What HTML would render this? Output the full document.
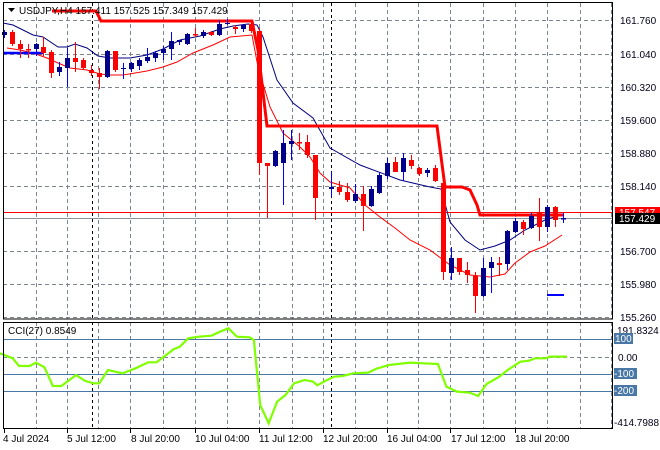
<!DOCTYPE html>
<html><head><meta charset="utf-8"><style>
html,body{margin:0;padding:0;background:#fff;}
svg{display:block;font-family:"Liberation Sans",sans-serif;}
</style></head><body>
<svg width="660" height="450" viewBox="0 0 660 450" xmlns="http://www.w3.org/2000/svg">
<rect width="660" height="450" fill="#fff"/>
<!-- vertical grid -->
<g stroke="#7a8590" stroke-width="1" stroke-dasharray="4,3">
<path d="M36.5 3V319M67.5 3V319M98.5 3V319M130.5 3V319M163.5 3V319M195.5 3V319M227.5 3V319M259.5 3V319M292.5 3V319M323.5 3V319M355.5 3V319M387.5 3V319M418.5 3V319M450.5 3V319M483.5 3V319M515.5 3V319M547.5 3V319M580.5 3V319M611.5 3V319"/>
<path d="M36.5 322V429M67.5 322V429M98.5 322V429M130.5 322V429M163.5 322V429M195.5 322V429M227.5 322V429M259.5 322V429M292.5 322V429M323.5 322V429M355.5 322V429M387.5 322V429M418.5 322V429M450.5 322V429M483.5 322V429M515.5 322V429M547.5 322V429M580.5 322V429M611.5 322V429"/>
<path d="M3 20.5H613M3 54.5H613M3 87.5H613M3 120.5H613M3 153.5H613M3 186.5H613M3 251.5H613M3 284.5H613M3 317.5H613"/>
<path d="M3 357.5H613"/>
</g>
<g stroke="#000" stroke-width="1" stroke-dasharray="3,3">
<path d="M92.5 3V319M92.5 322V429M331.5 3V319M331.5 322V429"/>
</g>
<!-- price lines -->
<line x1="3" y1="212.5" x2="613" y2="212.5" stroke="#ff0000"/>
<line x1="3" y1="218.5" x2="613" y2="218.5" stroke="#8a949c"/>
<!-- MAs -->
<polyline fill="none" stroke="#000080" stroke-width="1" points="3,23 13,25 33,35 43,37 58,47 67,47 75,44 87,48 98,56 110,58 130,58 147,55 163,49 180,40 200,36 220,29 233,26 248,24 257,25 263,37 277,80 293,103 313,118 330,148 360,165 400,180 430,187 441,189 450,222 465,240 480,250 495,246 510,240 525,230 545,220 560,215 563,214"/>
<polyline fill="none" stroke="#ff0000" stroke-width="1" points="7,48 20,50 33,53 47,58 58,63 70,68 87,70 100,74 110,75 123,75 147,71 163,67 177,62 193,53 213,45 230,37 252,35 258,67 270,107 283,133 300,147 310,157 320,173 330,182 350,188 365,205 380,217 395,228 410,240 430,250 450,265 470,275 490,277 505,274 515,263 530,252 545,246 562,235"/>
<!-- stepped red -->
<polyline fill="none" stroke="#ff0000" stroke-width="3" points="52,11 96,11 101,21 252,21 258,50 267,126 437,126 445,187 462,187 470,190 477,205 480,215 563,215"/>
<line x1="3" y1="53" x2="43" y2="53" stroke="#0000ff" stroke-width="2.5"/>
<line x1="547" y1="295" x2="564" y2="295" stroke="#0000ff" stroke-width="2"/>
<!-- candles -->
<g id="c"></g>
<g stroke-width="1">
<g stroke="#0000ff" fill="#00008b">
<path d="M4.5 30V38M36.5 43V56M59.5 62V76M67.5 48V87M107.5 50V78M123.5 63V79M131.5 62V72M139.5 58V70M147.5 48V63M155.5 51V62M163.5 46V60M171.5 32V60M179.5 40V45M187.5 33V45M203.5 30V38M219.5 20V36M227.5 19V25M243.5 24V32M275.5 150V167M283.5 130V205M291.5 130V160M331.5 172V197M355.5 184V203M371.5 186V207M379.5 172V194M387.5 158V179M403.5 153V181M427.5 168V177M451.5 247V280M483.5 258V297M491.5 257V293M507.5 230V270M515.5 218V233M531.5 213V229M547.5 205V232M563.5 213V223"/>
</g>
<g fill="#00008b">
<rect x="2" y="32" width="5" height="3"/><rect x="34" y="44" width="5" height="5"/><rect x="57" y="67" width="5" height="5"/><rect x="65" y="58" width="5" height="10"/><rect x="105" y="51" width="5" height="26"/><rect x="121" y="68" width="5" height="1"/><rect x="129" y="63" width="5" height="6"/><rect x="137" y="60" width="5" height="6"/><rect x="145" y="57" width="5" height="4"/><rect x="153" y="53" width="5" height="5"/><rect x="161" y="49" width="5" height="4"/><rect x="169" y="41" width="5" height="8"/><rect x="177" y="40" width="5" height="2"/><rect x="185" y="34" width="5" height="10"/><rect x="201" y="32" width="5" height="4"/><rect x="217" y="24" width="5" height="11"/><rect x="225" y="23" width="5" height="1"/><rect x="241" y="25" width="5" height="4"/><rect x="273" y="151" width="5" height="15"/><rect x="281" y="143" width="5" height="20"/><rect x="289" y="141" width="5" height="3"/><rect x="329" y="187" width="5" height="2"/><rect x="353" y="194" width="5" height="7"/><rect x="369" y="189" width="5" height="17"/><rect x="377" y="175" width="5" height="18"/><rect x="385" y="163" width="5" height="13"/><rect x="401" y="158" width="5" height="14"/><rect x="425" y="170" width="5" height="3"/><rect x="449" y="258" width="5" height="15"/><rect x="481" y="268" width="5" height="28"/><rect x="489" y="262" width="5" height="6"/><rect x="505" y="231" width="5" height="33"/><rect x="513" y="221" width="5" height="11"/><rect x="529" y="216" width="5" height="12"/><rect x="545" y="207" width="5" height="20"/><rect x="561" y="218" width="5" height="1.5"/>
</g>
<g stroke="#ff0000">
<path d="M12.5 30V46M20.5 40V58M28.5 44V58M43.5 37V56M51.5 50V78M75.5 42V72M83.5 58V70M91.5 65V76M99.5 68V89M115.5 51V72M195.5 28V37M211.5 31V36M235.5 25V34M251.5 22V33M259.5 28V175M267.5 163V218M299.5 133V150M307.5 135V158M315.5 155V220M339.5 181V195M347.5 183V202M363.5 186V231M395.5 157V172M411.5 155V169M419.5 167V176M435.5 165V182M443.5 183V280M459.5 258V275M467.5 262V283M475.5 272V313M499.5 257V276M523.5 220V235M539.5 198V241M555.5 206V227"/>
</g>
<g fill="#ff0000">
<rect x="10" y="32" width="5" height="12"/><rect x="18" y="44" width="5" height="5"/><rect x="26" y="49" width="5" height="1.5"/><rect x="41" y="47" width="5" height="6"/><rect x="49" y="52" width="5" height="21"/><rect x="73" y="58" width="5" height="4"/><rect x="81" y="60" width="5" height="8"/><rect x="89" y="70" width="5" height="3"/><rect x="97" y="73" width="5" height="4"/><rect x="113" y="51" width="5" height="19"/><rect x="193" y="34" width="5" height="1.5"/><rect x="209" y="32" width="5" height="3"/><rect x="233" y="27" width="5" height="2"/><rect x="249" y="24" width="5" height="7"/><rect x="257" y="31" width="5" height="132"/><rect x="265" y="163" width="5" height="3"/><rect x="297" y="142" width="5" height="1.5"/><rect x="305" y="142" width="5" height="13"/><rect x="313" y="155" width="5" height="43"/><rect x="337" y="187" width="5" height="5"/><rect x="345" y="192" width="5" height="8"/><rect x="361" y="194" width="5" height="12"/><rect x="393" y="162" width="5" height="10"/><rect x="409" y="160" width="5" height="6"/><rect x="417" y="168" width="5" height="6"/><rect x="433" y="168" width="5" height="13"/><rect x="441" y="183" width="5" height="89"/><rect x="457" y="258" width="5" height="14"/><rect x="465" y="270" width="5" height="5"/><rect x="473" y="276" width="5" height="20"/><rect x="497" y="263" width="5" height="2"/><rect x="521" y="222" width="5" height="7"/><rect x="537" y="213" width="5" height="14"/><rect x="553" y="207" width="5" height="13"/>
</g>
</g>
<!-- CCI levels -->
<g stroke="#4a78a6" stroke-width="1">
<path d="M3 339.5H613M3 374.5H613M3 391.5H613"/>
</g>
<g transform="translate(0,310) scale(0.4231,0.3333)">
<polyline fill="none" stroke="#7fff00" stroke-width="2.2" vector-effect="non-scaling-stroke" points="0,130 30,145 45,168 70,168 85,158 105,172 125,228 145,228 180,195 200,212 220,220 235,220 255,180 290,190 320,175 350,157 370,157 410,118 425,110 445,85 470,80 500,77 520,65 540,55 560,80 590,82 600,90 615,285 635,340 655,275 675,255 695,220 720,210 740,215 750,226 770,212 790,200 810,198 835,190 870,188 890,176 920,165 940,162 970,158 1000,160 1035,162 1055,230 1080,245 1110,248 1130,258 1150,222 1180,200 1200,180 1230,155 1250,152 1265,145 1290,145 1300,140 1340,140"/>
</g>
<!-- frames -->
<rect x="3.5" y="2.5" width="609" height="316.5" fill="none" stroke="#000"/>
<rect x="3.5" y="322.5" width="609" height="106" fill="none" stroke="#000"/>
<!-- time ticks -->
<g stroke="#000"><path d="M4.5 429V433M67.5 429V433M130.5 429V433M195.5 429V433M259.5 429V433M323.5 429V433M387.5 429V433M450.5 429V433M515.5 429V433"/></g>
<!-- texts -->
<g font-size="10" fill="#000">
<path d="M8 8H15L11.5 12Z" fill="#000"/>
<text x="19" y="14">USDJPY,H4  157.411 157.525 157.349 157.429</text>
<text x="8" y="334">CCI(27) 0.8549</text>
</g>
<g font-size="10" fill="#00001a">
<text x="620" y="24">161.760</text>
<text x="620" y="58">161.040</text>
<text x="620" y="91">160.320</text>
<text x="620" y="124">159.600</text>
<text x="620" y="157">158.880</text>
<text x="620" y="190">158.140</text>
<text x="620" y="255">156.700</text>
<text x="620" y="288">155.980</text>
<text x="620" y="321">155.260</text>
<text x="617" y="334">191.8324</text>
<text x="618" y="361">0.00</text>
<text x="614" y="426">-414.7988</text>
</g>
<rect x="615" y="207" width="45" height="10" fill="#ff0000"/>
<text x="619" y="216" font-size="10" fill="#fff">157.547</text>
<rect x="615" y="213" width="45" height="11" fill="#000"/>
<text x="619" y="222" font-size="10" fill="#fff">157.429</text>
<g font-size="10">
<rect x="614" y="333" width="19" height="11" fill="#4a78a6"/><text x="615" y="342" fill="#fff">100</text>
<rect x="614" y="368" width="23" height="11" fill="#4a78a6"/><text x="614" y="377" fill="#fff">-100</text>
<rect x="614" y="385" width="23" height="11" fill="#4a78a6"/><text x="614" y="394" fill="#fff">-200</text>
</g>
<g font-size="10" fill="#000">
<text x="3" y="442">4 Jul 2024</text>
<text x="67" y="442">5 Jul 12:00</text>
<text x="131" y="442">8 Jul 20:00</text>
<text x="195" y="442">10 Jul 04:00</text>
<text x="259" y="442">11 Jul 12:00</text>
<text x="323" y="442">12 Jul 20:00</text>
<text x="387" y="442">16 Jul 04:00</text>
<text x="451" y="442">17 Jul 12:00</text>
<text x="515" y="442">18 Jul 20:00</text>
</g>
</svg>
</body></html>
